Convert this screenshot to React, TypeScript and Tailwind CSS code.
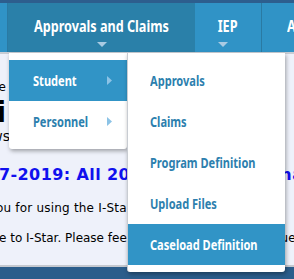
import React from "react";

const navFont = { fontFamily: '"Noto Sans", "DejaVu Sans", sans-serif' };

function Caret({ className = "" }: { className?: string }) {
  return (
    <svg width="10" height="5" viewBox="0 0 10 5" className={className}>
      <path d="M0 0 L10 0 L5 5 Z" fill="#a9cbe3" />
    </svg>
  );
}

function RightArrow() {
  return (
    <svg width="5" height="9" viewBox="0 0 5 9">
      <path d="M0 0 L5 4.5 L0 9 Z" fill="#8cc3e6" />
    </svg>
  );
}

function Narrow({ children, center = false }: { children: React.ReactNode; center?: boolean }) {
  return (
    <span className={center ? "inline-block origin-center scale-x-[0.79]" : "inline-block origin-left scale-x-[0.79]"}>
      {children}
    </span>
  );
}

export default function App() {
  const items = ["Approvals", "Claims", "Program Definition", "Upload Files", "Caseload Definition"];
  return (
    <div className="relative w-[294px] h-[279px] overflow-hidden bg-[#eef1fa]" style={navFont}>
      {/* top strip */}
      <div className="h-[3px] bg-[#2d5e8e]" />
      {/* nav */}
      <div className="flex h-[49px] bg-[#3093c6] whitespace-nowrap">
        <div className="w-[8px] shrink-0 border-r border-[#2a7aa3]" />
        <div className="relative flex w-[187px] shrink-0 items-center justify-center bg-[#2a80a9] text-[16px] font-bold text-white">
          <span className="-mt-[3px]"><Narrow center>Approvals and Claims</Narrow></span>
          <Caret className="absolute left-[89px] top-[39px]" />
        </div>
        <div className="relative flex w-[67px] shrink-0 items-center justify-center border-r border-[#2a7aa3] text-[16px] font-bold text-white">
          <span className="-mt-[3px]"><Narrow center>IEP</Narrow></span>
          <Caret className="absolute left-[23px] top-[39px]" />
        </div>
        <div className="flex shrink-0 items-center pl-[25px] text-[16px] font-bold text-white">
          <span className="-mt-[3px]"><Narrow>Admin</Narrow></span>
        </div>
      </div>
      <div className="h-[2px] bg-[#c9cdd4]" />
      {/* page content */}
      <div className="text-black" style={{ fontFamily: '"DejaVu Sans", Verdana, sans-serif' }}>
        <div className="mt-[26px] flex h-[14px] w-[6px] justify-end overflow-hidden text-[12px] leading-[14px]">
          <span className="whitespace-nowrap">Welcome</span>
        </div>
        <div className="mt-[4px] flex h-[30px] w-[6px] justify-end overflow-hidden text-[28px] font-bold leading-[30px]">
          <span className="whitespace-nowrap">I-Star Hi</span>
        </div>
        <div className="flex h-[16px] w-[10px] justify-end overflow-hidden text-[14px] leading-[16px]">
          <span className="whitespace-nowrap">News</span>
        </div>
        <div className="mt-[21px] whitespace-nowrap text-[16px] font-bold leading-[20px] tracking-[0.4px] text-[#1010ee]">
          <span className="-ml-[1px]">7-2019: All 2017-2019 Claims have been approved</span>
        </div>
        <div className="mt-[15px] whitespace-nowrap text-[12px] leading-[16px] tracking-[0.2px]">
          <span className="-ml-[4px]">ou for using the I-Star system.</span>
        </div>
        <div className="mt-[14px] whitespace-nowrap text-[12px] leading-[16px]">
          <span className="-ml-[1px]">e to I-Star. Please feel free to contact us with questions,</span>
        </div>
      </div>
      <div className="absolute left-0 right-0 top-[265px] h-[2px] bg-[#c4c8cf]" />
      <div className="absolute left-0 right-0 top-[267px] bottom-0 bg-[#2b5d8b]" />

      {/* dropdown 1 */}
      <div className="absolute left-[9px] top-[53px] w-[118px] rounded-b-[3px] bg-white py-[7px] shadow-[1px_2px_4px_rgba(0,0,0,0.35)]">
        <div className="flex h-[41px] items-center justify-between bg-[#3194c6] pl-[24px] pr-[15px] text-[14px] font-bold text-white">
          <Narrow>Student</Narrow>
          <RightArrow />
        </div>
        <div className="flex h-[41px] items-center justify-between pl-[24px] pr-[15px] text-[14px] font-bold text-[#2d7fae]">
          <Narrow>Personnel</Narrow>
          <RightArrow />
        </div>
      </div>

      {/* dropdown 2 */}
      <div className="absolute left-[127px] top-[53px] w-[158px] rounded-b-[3px] border-l border-[#c8ccd2] bg-white py-[7px] shadow-[1px_2px_4px_rgba(0,0,0,0.35)]">
        {items.map((t, i) => (
          <div
            key={t}
            className={
              i === 4
                ? "flex h-[41px] items-center whitespace-nowrap bg-[#3194c6] pl-[22px] text-[14px] font-bold text-white"
                : "flex h-[41px] items-center whitespace-nowrap pl-[22px] text-[14px] font-bold text-[#2d7fae]"
            }
          >
            <Narrow>{t}</Narrow>
          </div>
        ))}
      </div>
    </div>
  );
}
